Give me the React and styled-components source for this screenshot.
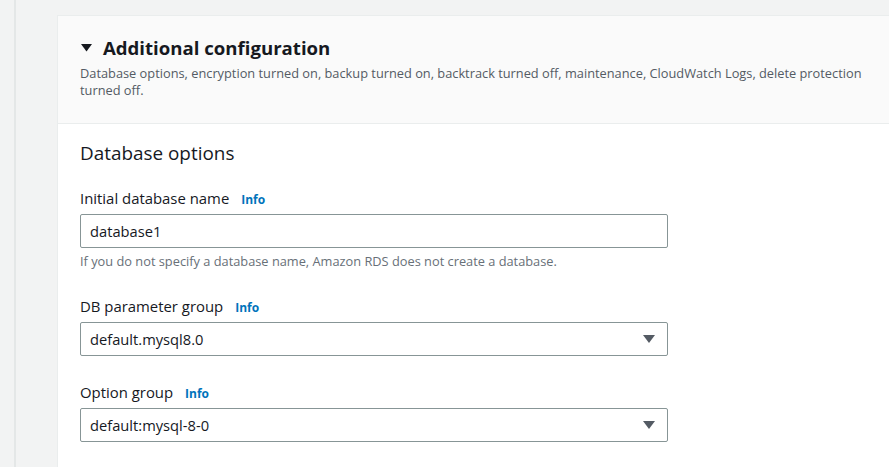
import styled, { createGlobalStyle } from 'styled-components';

const GlobalStyle = createGlobalStyle`
    body {
        margin: 0;
        background: #f2f3f3;
        font-family: "Open Sans", "Noto Sans", sans-serif;
        color: #16191f;
    }
`

const fields = [
    { label: 'DB parameter group', value: 'default.mysql8.0' },
    { label: 'Option group', value: 'default:mysql-8-0' },
];

const Caret = () => (
    <svg width='11' height='8' viewBox='0 0 11 8'>
        <polygon points='0,0 11,0 5.5,7.5' fill='#16191f' />
    </svg>
)

const SelectArrow = () => (
    <svg width='12' height='8' viewBox='0 0 12 8'>
        <polygon points='0,0 12,0 6,8' fill='#545b64' />
    </svg>
)

const App = () => {
    return (
        <>
            <GlobalStyle />
            <Page>
                <Rail />
                <Main>
                    <Panel>
                        <PanelHeader>
                            <TitleRow>
                                <Caret />
                                <Title>Additional configuration</Title>
                            </TitleRow>
                            <Description>
                                Database options, encryption turned on, backup turned on, backtrack turned off, maintenance, CloudWatch Logs, delete protection turned off.
                            </Description>
                        </PanelHeader>
                        <PanelBody>
                            <SectionTitle>Database options</SectionTitle>
                            <Field>
                                <Label>Initial database name<Info>Info</Info></Label>
                                <TextInput type='text' defaultValue='database1' />
                                <Hint>If you do not specify a database name, Amazon RDS does not create a database.</Hint>
                            </Field>
                            {fields.map(f => (
                                <Field key={f.label}>
                                    <Label>{f.label}<Info>Info</Info></Label>
                                    <Select>
                                        <span>{f.value}</span>
                                        <SelectArrow />
                                    </Select>
                                </Field>
                            ))}
                        </PanelBody>
                    </Panel>
                </Main>
            </Page>
        </>
    )
}

const Page = styled.div `
    display: flex;
    height: 467px;
    overflow: hidden;
`

const Rail = styled.div `
    width: 14px;
    flex: none;
    border-right: 2px solid #e4e7e7;
`

const Main = styled.div `
    flex: 1;
    padding: 15px 0 0 41px;
    min-width: 0;
`

const Panel = styled.div `
    width: 900px;
    border-top: 1px solid #eaeded;
    border-left: 1px solid #eaeded;
    background: #ffffff;
    height: 100%;
`

const PanelHeader = styled.div `
    background: #fafafa;
    border-bottom: 1px solid #eaeded;
    padding: 20px 22px 24px 22px;
`

const TitleRow = styled.div `
    display: flex;
    align-items: center;
    gap: 11px;
    padding-left: 1px;
`

const Title = styled.h2 `
    margin: 0;
    font-size: 18.6px;
    line-height: 24px;
    font-weight: 700;
`

const Description = styled.p `
    margin: 5px 0 0;
    max-width: 800px;
    font-size: 12.8px;
    line-height: 17px;
    color: #545b64;
`

const PanelBody = styled.div `
    padding: 16px 22px;
    width: 588px;
`

const SectionTitle = styled.h3 `
    margin: 0 0 21px;
    font-size: 18.9px;
    line-height: 26px;
    font-weight: 400;
`

const Field = styled.div `
    margin-bottom: 25px;
`

const Label = styled.div `
    height: 22px;
    font-size: 14.9px;
    line-height: 22px;
    margin-bottom: 5px;
`

const Info = styled.span `
    margin-left: 12px;
    font-size: 12px;
    line-height: 1;
    font-weight: 700;
    color: #0073bb;
`

const TextInput = styled.input `
    display: block;
    box-sizing: border-box;
    width: 100%;
    height: 34px;
    border: 1px solid #879596;
    border-radius: 2px;
    padding: 0 9px;
    font-family: inherit;
    font-size: 14.7px;
    color: #16191f;
    outline: none;
`

const Select = styled.div `
    box-sizing: border-box;
    height: 34px;
    border: 1px solid #879596;
    border-radius: 2px;
    padding: 0 12px 0 9px;
    display: flex;
    align-items: center;
    justify-content: space-between;
    font-size: 14.7px;
`

const Hint = styled.div `
    margin-top: 5px;
    font-size: 12.8px;
    line-height: 17px;
    color: #687078;
`

export default App;
